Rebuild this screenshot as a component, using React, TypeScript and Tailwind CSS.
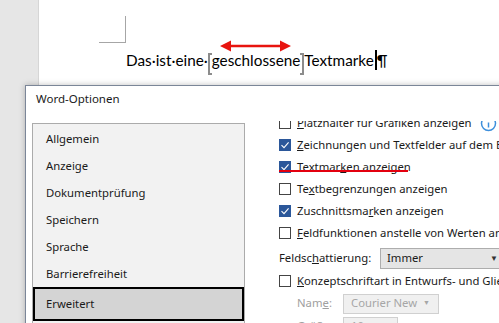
import React from "react";

const ui = { fontFamily: '"Noto Sans", "Open Sans", sans-serif' };
const doc = { fontFamily: 'Lato, "Open Sans", sans-serif' };

const Check = ({ on }: { on?: boolean }) =>
  on ? (
    <span className="flex h-[12px] w-[12px] shrink-0 items-center justify-center bg-[#2b579a]">
      <svg width="10" height="10" viewBox="0 0 10 10">
        <path d="M1.5 5.2 L4 7.6 L8.6 2.4" fill="none" stroke="#fff" strokeWidth="1.1" />
      </svg>
    </span>
  ) : (
    <span className="h-[12px] w-[12px] shrink-0 border border-[#444] bg-white" />
  );

const Row = ({ on, children }: { on?: boolean; children: React.ReactNode }) => (
  <div className="flex h-[22px] items-center gap-[6px] whitespace-nowrap">
    <Check on={on} />
    <span>{children}</span>
  </div>
);

const Bracket = ({ right }: { right?: boolean }) => (
  <span
    className={`inline-block h-[22px] w-[4px] translate-y-[4px] border-y-2 border-[#8c8c8c] ${
      right ? "border-r-2" : "border-l-2"
    }`}
  />
);

export default function App() {
  const menu = ["Allgemein", "Anzeige", "Dokumentprüfung", "Speichern", "Sprache", "Barrierefreiheit"];
  return (
    <div className="relative flex h-[323px] w-[499px] overflow-hidden bg-white">
      {/* Word window behind */}
      <div className="h-full w-[39px] shrink-0 border-r border-[#d6d6d6] bg-[#e6e6e6]" />
      <div className="relative flex-1">
        <div className="ml-[60px] mt-[16px] h-[27px] w-[27px] border-b border-r border-[#a6a6a6]" />
        <div className="ml-[87px] mt-[6px] flex items-center text-[15.3px] leading-[22px] text-black" style={doc}>
          <span>Das·ist·eine·</span>
          <Bracket />
          <span>geschlossene</span>
          <Bracket right />
          <span>Textmarke</span>
          <span className="ml-[1px] h-[20px] w-[2px] bg-black" />
          <span>¶</span>
        </div>
        {/* annotation arrow */}
        <svg className="absolute left-[181px] top-[40px]" width="71" height="12" viewBox="0 0 71 12">
          <path d="M8 6 H63" stroke="#e8140f" strokeWidth="2.5" />
          <path d="M0 6 L11 0.5 L11 11.5 Z M71 6 L60 0.5 L60 11.5 Z" fill="#e8140f" />
        </svg>
      </div>

      {/* Dialog */}
      <div
        className="absolute left-[25px] top-[85px] h-[260px] w-[520px] border border-[#7b8698] bg-white text-[11.3px] text-[#1a1a1a] shadow-[0_0_6px_rgba(0,0,0,0.25)]"
        style={ui}
      >
        <div className="pl-[10px] pt-[4px] text-[11.5px] leading-[18px]">Word-Optionen</div>
        <div className="mt-[15px] flex h-full">
          <div className="ml-[6px] w-[213px] shrink-0 border border-[#ababab] bg-[#f2f2f2] pt-[2px]">
            {menu.map((m) => (
              <div key={m} className="flex h-[27px] items-center pl-[13px]">
                {m}
              </div>
            ))}
            <div className="mt-[-1px] flex h-[34px] items-center border-2 border-black bg-[#d4d4d4] pl-[11px]">
              Erweitert
            </div>
          </div>

          <div className="ml-[34px] mt-[-2px] flex-1 overflow-hidden">
            <div className="mt-[-9px]">
              <div className="flex h-[22px] items-center gap-[6px] whitespace-nowrap">
                <Check />
                <span>
                  <u>P</u>latzhalter für Grafiken anzeigen
                </span>
                <svg className="ml-[2px]" width="17" height="17" viewBox="0 0 17 17">
                  <circle cx="8.5" cy="8.5" r="7" fill="none" stroke="#3d8fdc" strokeWidth="1.5" />
                  <path d="M8.5 7.5 V12.5" stroke="#3d8fdc" strokeWidth="1.5" />
                </svg>
              </div>
              <Row on>
                <u>Z</u>eichnungen und Textfelder auf dem Bildschirm anzeigen
              </Row>
              <div className="relative">
                <Row on>
                  Textmar<u>k</u>en anzeigen
                </Row>
                <span className="absolute left-[-1px] top-[14px] h-[2px] w-[130px] bg-[#e3000f]" />
              </div>
              <Row>
                Te<u>x</u>tbegrenzungen anzeigen
              </Row>
              <Row on>
                Zuschnittsma<u>r</u>ken anzeigen
              </Row>
              <Row>
                <u>F</u>eldfunktionen anstelle von Werten anzeigen
              </Row>
              <div className="mt-[2px] flex h-[24px] items-center whitespace-nowrap">
                <span className="w-[101px] shrink-0">
                  Feldsc<u>h</u>attierung:
                </span>
                <div className="flex h-[21px] w-[125px] shrink-0 items-center justify-between border border-[#adadad] bg-[#e5e5e5] pl-[6px] pr-[6px]">
                  <span>Immer</span>
                  <span className="text-[8px] text-[#333]">▼</span>
                </div>
              </div>
              <Row>
                <u>K</u>onzeptschriftart in Entwurfs- und Gliederungsansicht verwenden
              </Row>
              <div className="flex h-[23px] items-center whitespace-nowrap pl-[18px] text-[#a0a0a0]">
                <span className="w-[46px] shrink-0">
                  Nam<u>e</u>:
                </span>
                <div className="flex h-[20px] w-[96px] shrink-0 items-center justify-between border border-[#d0d0d0] bg-[#f0f0f0] pl-[7px] pr-[8px] text-[#a6a6a6]">
                  <span>Courier New</span>
                  <span className="text-[7px]">▼</span>
                </div>
              </div>
              <div className="flex h-[23px] items-center whitespace-nowrap pl-[18px] text-[#a0a0a0]">
                <span className="w-[46px] shrink-0">
                  <u>G</u>röße:
                </span>
                <div className="flex h-[20px] w-[55px] shrink-0 items-center border border-[#d0d0d0] bg-[#f0f0f0] pl-[7px] text-[#a6a6a6]">
                  10
                </div>
              </div>
            </div>
          </div>
        </div>
      </div>
    </div>
  );
}
